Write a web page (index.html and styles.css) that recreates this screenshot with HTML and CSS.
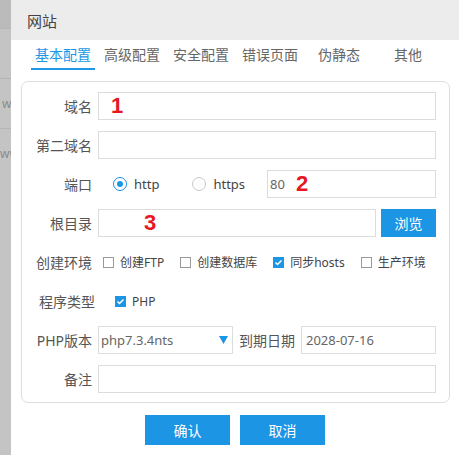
FILE: index.html
```html
<!DOCTYPE html>
<html lang="zh-CN">
<head>
<meta charset="utf-8">
<title>网站</title>
<link rel="stylesheet" href="styles.css">
</head>
<body>
<div class="page">
  <div class="side">
    <div class="side-top"></div>
    <div class="side-row"></div>
    <div class="side-row"><span class="side-text one">w</span></div>
    <div class="side-row"><span class="side-text two">ww</span></div>
  </div>
  <div class="dialog">
    <div class="title">网站</div>
    <div class="tabs">
      <div class="tab active">基本配置</div>
      <div class="tab">高级配置</div>
      <div class="tab">安全配置</div>
      <div class="tab">错误页面</div>
      <div class="tab">伪静态</div>
      <div class="tab">其他</div>
    </div>
    <div class="card">
      <div class="row">
        <div class="lbl">域名</div>
        <div class="input"><span class="mark m1">1</span></div>
      </div>
      <div class="row">
        <div class="lbl">第二域名</div>
        <div class="input"></div>
      </div>
      <div class="row">
        <div class="lbl">端口</div>
        <div class="radios">
          <span class="radio on"></span><span class="opt">http</span>
          <span class="radio"></span><span class="opt">https</span>
        </div>
        <div class="input port"><span class="val">80</span><span class="mark m2">2</span></div>
      </div>
      <div class="row">
        <div class="lbl">根目录</div>
        <div class="input"><span class="mark m3">3</span></div>
        <button class="browse">浏览</button>
      </div>
      <div class="row">
        <div class="lbl">创建环境</div>
        <div class="checks">
          <span class="check"><span class="box"></span>创建FTP</span>
          <span class="check"><span class="box"></span>创建数据库</span>
          <span class="check"><svg class="box-on" width="11" height="11" viewBox="0 0 11 11"><rect width="11" height="11" fill="#1b95e4"/><polyline points="2.5,5.5 4.5,7.5 8.5,3.5" fill="none" stroke="#fff" stroke-width="1.5"/></svg>同步hosts</span>
          <span class="check"><span class="box"></span>生产环境</span>
        </div>
      </div>
      <div class="row">
        <div class="lbl wide">程序类型</div>
        <div class="checks php">
          <span class="check"><svg class="box-on" width="11" height="11" viewBox="0 0 11 11"><rect width="11" height="11" fill="#1b95e4"/><polyline points="2.5,5.5 4.5,7.5 8.5,3.5" fill="none" stroke="#fff" stroke-width="1.5"/></svg>PHP</span>
        </div>
      </div>
      <div class="row">
        <div class="lbl">PHP版本</div>
        <div class="input select"><span class="val">php7.3.4nts</span><svg width="9" height="8" viewBox="0 0 9 8"><polygon points="0,0 9,0 4.5,8" fill="#1b95e4"/></svg></div>
        <div class="lbl2">到期日期</div>
        <div class="input date"><span class="val">2028-07-16</span></div>
      </div>
      <div class="row">
        <div class="lbl">备注</div>
        <div class="input"></div>
      </div>
    </div>
    <div class="actions">
      <button class="btn">确认</button>
      <button class="btn">取消</button>
    </div>
  </div>
</div>
</body>
</html>
```
FILE: styles.css
```css
* { box-sizing: border-box; }
html, body { margin: 0; padding: 0; }
body {
  width: 459px;
  height: 455px;
  overflow: hidden;
  font-family: "Noto Sans", "Noto Sans CJK SC", sans-serif;
  background: #fff;
}
.page {
  display: flex;
  height: 455px;
}
.side {
  width: 11px;
  flex: none;
  background: #c4c4c4;
  overflow: hidden;
}
.side-top {
  height: 28px;
  background: #bbbbbb;
}
.side-row {
  height: 50px;
  border-top: 1px solid #b4b4b4;
  display: flex;
  align-items: center;
  white-space: nowrap;
  font-size: 12px;
  color: #8a8a8a;
}
.side-text.one { margin-left: 2px; }
.side-text.two { margin-left: 0; }
.dialog {
  flex: 1;
  display: flex;
  flex-direction: column;
  background: #fff;
}
.title {
  height: 40px;
  line-height: 42px;
  padding-left: 16px;
  background: #ececec;
  font-size: 15px;
  color: #444;
}
.tabs {
  display: flex;
  gap: 5px;
  height: 30px;
  padding: 2px 0 0 20px;
}
.tab {
  width: 64px;
  height: 28px;
  line-height: 26px;
  text-align: center;
  font-size: 14px;
  color: #666;
  border-bottom: 2px solid transparent;
}
.tab.active {
  color: #2196e3;
  border-bottom-color: #2196e3;
}
.card {
  margin: 11px 9px 0 10px;
  border: 1px solid #dedede;
  border-radius: 7px;
  padding: 10px 13px 9px 0;
}
.row {
  display: flex;
  align-items: center;
  height: 28px;
  margin-top: 11px;
  white-space: nowrap;
}
.row:first-child { margin-top: 0; }
.lbl {
  width: 70px;
  margin-right: 6px;
  flex: none;
  text-align: right;
  font-size: 14px;
  color: #555;
}
.lbl.wide { width: 73px; }
.input {
  flex: 1;
  height: 28px;
  border: 1px solid #dcdcdc;
  display: flex;
  align-items: center;
  padding-left: 2px;
  font-size: 13px;
  color: #666;
}
.val { color: #666; }
.mark {
  font-family: "Liberation Sans", sans-serif;
  font-weight: bold;
  font-size: 22px;
  line-height: 1;
  color: #e6171f;
}
.m1 { margin-left: 10px; }
.m2 { margin-left: 11px; }
.m3 { margin-left: 43px; }
.radios {
  display: flex;
  align-items: center;
  padding-left: 15px;
  font-size: 13px;
  color: #444;
}
.radio {
  width: 14px;
  height: 14px;
  border-radius: 50%;
  border: 1px solid #c8c8c8;
  position: relative;
  margin-right: 7px;
}
.radio.on { border-color: #1b95e4; }
.radio.on::after {
  content: "";
  position: absolute;
  left: 3px;
  top: 3px;
  width: 6px;
  height: 6px;
  border-radius: 50%;
  background: #1b95e4;
}
.opt { margin-right: 33px; }
.opt:last-child { margin-right: 0; }
.input.port {
  flex: none;
  width: 169px;
  margin-left: auto;
}
.browse {
  flex: none;
  width: 55px;
  height: 28px;
  margin-left: 5px;
  border: none;
  background: #1b95e4;
  color: #fff;
  font-family: inherit;
  font-size: 14px;
  padding: 0;
}
.checks {
  display: flex;
  align-items: center;
  flex: none;
  padding-left: 5px;
  font-size: 12px;
  color: #444;
}
.checks.php { padding-left: 14px; }
.check {
  display: flex;
  align-items: center;
  flex: none;
  margin-right: 16px;
}
.check:last-child { margin-right: 0; }
.box {
  width: 11px;
  height: 11px;
  border: 1px solid #999;
  margin-right: 6px;
  flex: none;
}
.box-on {
  margin-right: 6px;
  flex: none;
}
.input.select {
  flex: none;
  width: 135px;
  justify-content: space-between;
  padding-right: 4px;
}
.lbl2 {
  margin: 0 6px;
  font-size: 14px;
  color: #555;
}
.input.date { padding-left: 4px; }
.actions {
  display: flex;
  justify-content: center;
  gap: 10px;
  margin-top: 12px;
}
.btn {
  width: 85px;
  height: 30px;
  border: none;
  background: #1b95e4;
  color: #fff;
  font-family: inherit;
  font-size: 14px;
  padding: 0;
}
```
